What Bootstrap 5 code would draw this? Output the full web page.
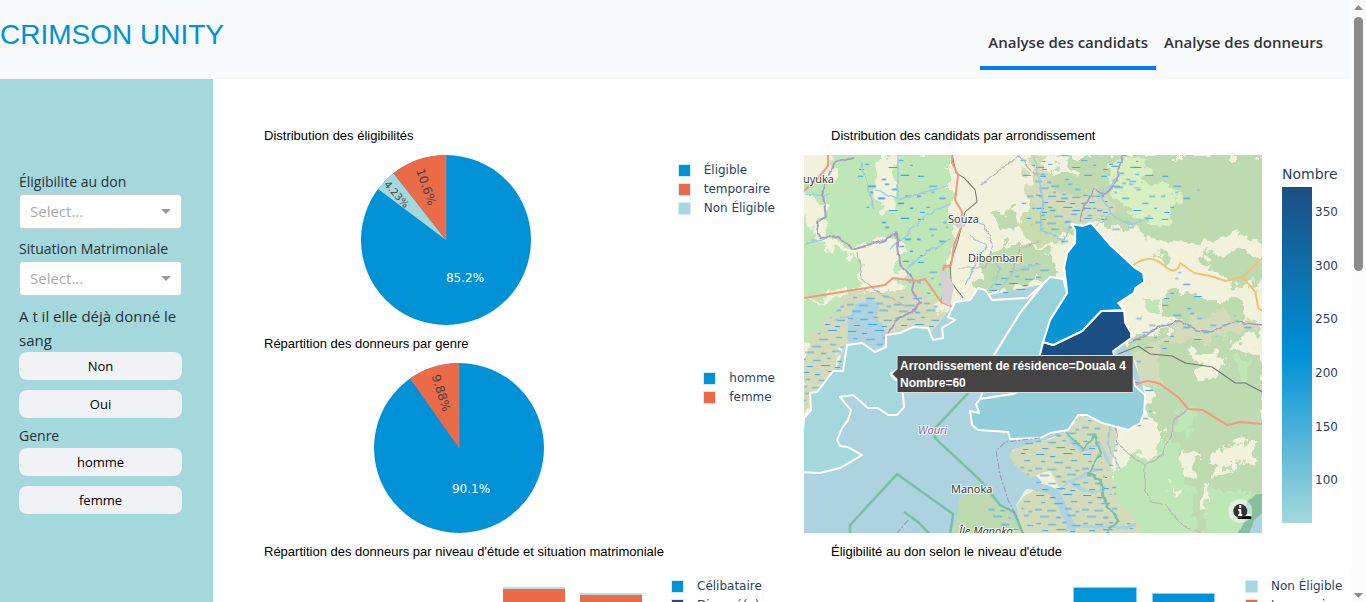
<!DOCTYPE html>
<html lang="fr">
<head>
<meta charset="utf-8">
<meta name="viewport" content="width=device-width, initial-scale=1">
<title>Crimson Unity</title>
<link href="https://cdn.jsdelivr.net/npm/bootstrap@5.3.0/dist/css/bootstrap.min.css" rel="stylesheet">
<style>
:root{--blue:#0091d7;--red:#eb6a48;--teal:#a5d8dc;--navy:#1b4f83;--ink:#2a3f5f}
body{font-family:"Open Sans","Noto Sans",sans-serif;background:#fff}
.topbar{background:#f8f9fb;height:79px;padding-right:20px}
.brand-name{font:28px/36px "Liberation Sans",Arial,sans-serif;color:var(--blue);padding-top:17px}
.tabs{padding-top:15px}
.tabs .nav-link{font-size:15px;line-height:24px;font-weight:600;color:#333;padding:15px 8px 12px;border-bottom:4px solid transparent}
.tabs .nav-link.active{border-color:#007bff}
.side{flex:0 0 213px;background:var(--teal);padding:91px 31px 0 19px;color:#24313a;font-size:14px;line-height:24px}
.side label{display:block}
.side .question{font-size:15px}
.side .group{margin-bottom:8px}
.side .group-tight{margin-bottom:6px}
.side .choices{gap:10px}
.pick{display:block;width:100%;height:35px;appearance:none;border:1px solid #ccc;border-radius:4px;color:#aaa;padding:0 10px 2px;font-size:15px;
 background:#fff url("data:image/svg+xml,%3Csvg xmlns='http://www.w3.org/2000/svg' width='10' height='5'%3E%3Cpath d='M0 0h10L5 5z' fill='%23999'/%3E%3C/svg%3E") no-repeat right 10px center}
.choice{height:28px;background:#f0f2f5;border:0;border-radius:8px;color:#000;font-size:13px;line-height:20px;padding:0}
.charts{display:grid;grid-template-columns:1fr 1fr;column-gap:20px;padding:46px 0 0 24px}
.chart-title{font:13px/20px "Liberation Sans",Arial,sans-serif;color:#000;margin:0;padding:1px 0 0 27px}
.chart-block{display:flex;flex-direction:column;gap:9px;padding-bottom:8px}
.tall{grid-row:span 2}
.plot{height:170px;padding-right:9px;gap:22px}
.key{font:12px/19px "DejaVu Sans",Verdana,sans-serif;color:var(--ink);padding:6px 0 0;margin:0;list-style:none;white-space:nowrap}
.key li{display:flex;align-items:center;gap:13px}
.key i{width:13px;height:13px;border:1px solid #d3ebf6}
.key-wide{width:104px}
.k-blue{background:var(--blue)}.k-red{background:var(--red)}.k-teal{background:var(--teal)}.k-navy{background:var(--navy)}
svg text{font-family:"DejaVu Sans",Verdana,sans-serif;font-size:12px}
.map-row{height:378px;gap:20px;padding-right:9px}
.map-row .town{font-family:"Open Sans","Noto Sans",sans-serif;font-size:11px;fill:#333;stroke:#fff;stroke-width:2px;stroke-opacity:.8;paint-order:stroke}
.map-row .tip{font:bold 12px "Liberation Sans",Arial,sans-serif;fill:#fff}
.map-row .scale-title{font-size:14px}
.rail{flex:0 0 15px;background:#fcfcfc}
.rail .thumb{width:9px;height:254px;border-radius:5px;background:#8b8b8b}
</style>
</head>
<body>
<div class="d-flex vh-100 overflow-hidden">
<div class="flex-fill overflow-hidden d-flex flex-column">
 <header class="topbar d-flex justify-content-between flex-shrink-0">
  <div class="brand-name">CRIMSON UNITY</div>
  <nav class="nav tabs align-items-start">
   <a class="nav-link active" href="#candidats">Analyse des candidats</a>
   <a class="nav-link" href="#donneurs">Analyse des donneurs</a>
  </nav>
 </header>
 <div class="d-flex flex-fill">
  <aside class="side">
   <div class="group"><label for="elig">Éligibilite au don</label><select class="pick" id="elig"><option>Select...</option></select></div>
   <div class="group"><label for="situ">Situation Matrimoniale</label><select class="pick" id="situ"><option>Select...</option></select></div>
   <div class="group-tight"><div class="question">A t il elle déjà donné le sang</div>
    <div class="d-grid choices"><button class="btn choice" type="button">Non</button><button class="btn choice" type="button">Oui</button></div></div>
   <div><div>Genre</div>
    <div class="d-grid choices"><button class="btn choice" type="button">homme</button><button class="btn choice" type="button">femme</button></div></div>
  </aside>
  <main class="charts flex-fill align-content-start">
   <section class="chart-block">
    <h2 class="chart-title">Distribution des éligibilités</h2>
    <div class="plot d-flex">
     <div class="flex-fill text-center"><svg width="170" height="170" viewBox="-85 -85 170 170">
      <circle r="85" fill="#0091d7"/>
      <path d="M0 0L-68 -51A85 85 0 0 1 -52.500 -66.800Z" fill="#a5d8dc"/>
      <path d="M0 0L-52.500 -66.800A85 85 0 0 1 0 -85Z" fill="#eb6a48"/>
      <path d="M0 0V-85" stroke="#a58f94" stroke-width=".7"/>
      <text x="19" y="42" text-anchor="middle" fill="#fff">85.2%</text>
      <text transform="translate(-20 -53) rotate(71)" text-anchor="middle" y="4" fill="#444">10.6%</text>
      <text transform="translate(-49 -46) rotate(48)" text-anchor="middle" y="4" fill="#444" style="font-size:10px">4.23%</text>
     </svg></div>
     <ul class="key"><li><i class="k-blue"></i>Éligible</li><li><i class="k-red"></i>temporaire</li><li><i class="k-teal"></i>Non Éligible</li></ul>
    </div>
   </section>
   <section class="chart-block tall">
    <h2 class="chart-title">Distribution des candidats par arrondissement</h2>
    <div class="map-row d-flex">
     <svg class="flex-fill" width="10" height="378" viewBox="804 155 458 378" preserveAspectRatio="xMidYMid slice">
      <defs>
       <filter id="rough" x="-20%" y="-20%" width="140%" height="140%"><feTurbulence type="fractalNoise" baseFrequency=".07" numOctaves="4" seed="4"/><feDisplacementMap in="SourceGraphic" scale="26" xChannelSelector="R" yChannelSelector="G"/></filter>
       <filter id="wavy" x="-20%" y="-20%" width="140%" height="140%"><feTurbulence type="fractalNoise" baseFrequency=".09" numOctaves="2" seed="8"/><feDisplacementMap in="SourceGraphic" scale="6" xChannelSelector="R" yChannelSelector="G"/></filter>
       <pattern id="marsh" width="47" height="41" patternUnits="userSpaceOnUse"><path transform="translate(0 .5)" d="M2 3h8M16 5h5M29 2h9M7 10h4M20 11h9M37 9h6M1 17h7M13 18h9M31 16h6M41 19h4M6 24h9M22 25h5M33 23h9M2 31h5M14 32h8M28 30h4M38 33h8M8 38h6M22 37h9M36 39h5" stroke="#3d9df2" fill="none"/></pattern>
       <pattern id="sparse" width="61" height="43" patternUnits="userSpaceOnUse"><path transform="translate(0 .5)" d="M3 4h6M28 7h4M47 3h8M14 14h8M38 17h5M2 24h4M24 26h7M51 24h6M11 35h4M35 38h8M56 36h3M16 20h3M44 31h6M31 12h4M5 40h5" stroke="#3d9df2" fill="none"/></pattern>
       <clipPath id="frame"><path d="M804 155h458v378H804z"/></clipPath>
      </defs>
      <g clip-path="url(#frame)" fill="none" stroke-linejoin="round">
       <path fill="#f1f1dc" d="M790 140h490v410H790z"/>
       <!-- forests and meadows -->
       <g filter="url(#rough)">
        <path fill="#bee6b6" d="M838 150H950V180L952 235L944 300L915 300L900 285V240L880 240L855 252L828 238L822 215L826 200L800 195V185L830 178zM790 205L820 235L830 250L857 258L862 285L800 305z"/>
        <path fill="#bee6b6" d="M800 306L855 297L840 318L804 345z"/>
        <path fill="#bddab1" d="M1040 155H1280V250L1245 235L1200 244L1165 240L1125 230L1100 222L1070 232L1048 240L1030 225L1040 190zM1200 255L1240 250L1262 262V285L1240 288L1215 276zM1120 345L1150 335L1190 322L1262 325V432L1235 450L1200 470L1175 455L1150 405L1140 380z"/>
        <path fill="#bddab1" d="M1165 290L1195 290L1205 300L1240 300L1244 318L1190 325L1160 320zM1160 420L1280 430V550H1150L1125 480zM1005 245L1035 245L1060 262L1050 280L1000 290L975 290L985 255z"/>
        <path fill="#bee6b6" d="M1125 455L1170 440L1185 480L1200 550H1130L1105 485zM1205 490L1250 490L1245 550H1205zM1143 295l14 5 4 15-16-2zM1180 410l20 5-10 18-17-5zM1235 360h14v18h-14z"/>
        <path fill="#d3dcba" d="M845 290L900 290L925 290L945 310L950 345L885 345L840 350L842 376L800 420V350L830 315zM1030 155H1048L1055 188L1080 195L1105 188L1112 212L1090 224L1065 227L1030 235L1028 180zM1180 325L1220 310L1262 330L1220 338L1160 345L1127 358zM1120 350L1160 345L1160 385L1145 390z"/>
        <path fill="#d8efc2" d="M1120 155L1150 160L1143 180L1180 190L1165 225L1130 215L1108 190L1110 165z"/>
        <path fill="#f1f1dc" d="M883 155H898L896 180L890 215L876 205L875 175zM1050 155L1068 160L1075 178L1060 172L1045 165zM1188 350L1225 355L1218 375L1195 378zM1180 450L1200 453L1195 475L1180 472zM1165 480L1180 483L1170 505L1160 522zM1210 450L1255 438V460L1230 465L1228 475L1210 470zM1205 485h8l-5 30-8-6z"/>
        <path fill="#f1f1dc" d="M1110 430L1130 435L1145 420L1165 435L1155 460L1130 465L1115 455zM1228 345L1262 335V350L1248 355z"/>
        <path fill="#bddab1" d="M990 218l22-12 10 20-20 8zM1155 258l9-8 8 14-8 4z"/>
       </g>
       <path fill="#c8dcae" filter="url(#rough)" d="M1025 205h30l10 35-20 8-24-15z"/>
       <!-- estuary -->
       <path fill="#acd3df" d="M804 420L812 408L812 395L835 372L845 346L870 344L884 348L886 335L930 335L955 302L1040 285L1130 350L1145 395L1140 425L1128 430L1078 415L1066 432L1045 440L1012 450L1012 458L1030 470L1042 482L1025 490L1016 505L1025 534H804z"/>
       <path fill="#acd3df" filter="url(#wavy)" d="M848 320l8-16 14-6 9 6-2 14 10 18-4 14-20-6-16 2z"/>
       <path fill="#d3dcba" d="M1066 432L1078 415L1102 423L1117 427L1115 448L1110 470L1118 500L1140 525L1135 534H1020L1017 505L1024 496L1042 486L1060 490L1050 470L1030 478L1015 465L1009 455L1016 448L1050 439z"/>
       <path fill="#bddab1" d="M959 499L970 486H983L993 498L1010 512L1020 534H950L956 520z"/>
       <path fill="#bee6b6" filter="url(#rough)" d="M1120 460l45-5 10 40 25 45h-50l-22-50z"/>
       <path stroke="#acd3df" stroke-width="8" d="M1012 479C1035 490 1048 485 1056 495S1065 520 1075 530"/>
       <g stroke="#acd3df" stroke-width="3" filter="url(#wavy)"><path d="M1055 492C1070 475 1085 480 1095 470M1065 530C1085 520 1110 533 1135 525M1066 435L1080 450L1100 445L1110 465M1070 480Q1090 500 1105 487"/></g>
       <!-- wetlands -->
       <g fill="url(#marsh)"><path d="M804 353L830 318L850 295H925L943 310L940 335L925 326L886 332L882 347L846 343L840 369L812 393L804 412z"/>
        <path d="M1022 436L1066 432L1078 415L1100 424L1100 450L1105 480L1118 510L1115 533H1030L1020 505L1035 482L1020 468z"/>
        <path d="M1035 160h10l8 30 25 4 25-6 8 25-20 8-40 5-20 8zM1115 157h22l6 30-30 5-5-18zM985 281L1035 262L1065 275L1035 284L1025 295L990 297z"/>
        <path d="M985 503L1003 508L1020 530H997z"/></g>
       <g fill="url(#sparse)"><path d="M856 160L900 158L945 190L950 250L938 300L905 280L900 235L880 225L860 195z"/>
        <path d="M870 160L920 165V280L903 260L895 230L865 225zM1020 155H1125L1200 190L1185 225L1110 235L1060 245L1022 215z"/>
        <path d="M1135 315L1225 308L1255 330L1170 345L1140 375L1160 385L1145 430L1118 440L1115 510L1170 530H1130L1104 480L1120 430zM1180 270L1205 300L1200 340L1130 335z"/></g>
       <!-- rivers -->
       <g stroke="#9fcbe0" stroke-width="1.500" filter="url(#wavy)"><path d="M805 193L830 195M805 244L828 238M860 160L875 210M876 190L898 200V155M898 200L950 185M890 250L925 215L950 205M905 270L930 250L950 240M895 235L880 240M965 285L985 245L970 235M990 250L1000 270L990 290M1000 290L1015 270L1038 265M1034 155L1043 200L1040 230L1065 240L1070 225M1122 157L1113 185L1100 195L1111 213L1095 228M1111 213Q1130 230 1142 220M835 320L855 313M1110 425L1108 445L1120 470"/></g>
       <g filter="url(#wavy)"><path stroke="#a99bc4" stroke-width="2" d="M853 158L835 163L826 180L823 195L826 217L816 222L819 238L840 236L852 250L870 245L884 240L897 233L900 265L908 272L914 280L912 290L920 303L912 312L895 320L885 340M847 345L845 370L812 395L811 412"/>
        <path stroke="#a99bc4" stroke-width="1.500" d="M1122 155L1115 185L1103 195L1094 190L1085 205L1080 222M1128 343L1155 330L1180 320L1195 330L1212 332L1235 322L1262 325"/></g>
       <g stroke="#b7aeba" filter="url(#wavy)"><path d="M980 185L1004 168L1018 155L1035 175L1042 175M970 220L985 225L993 245L985 268L958 268M1040 240L1020 250L1010 275M858 252L862 280L875 290L908 307M1114 425L1118 445L1145 465L1144 485L1150 502L1165 505L1183 525L1200 532M1147 465L1162 455L1175 420L1188 408"/></g>
       <path stroke="#71756e" d="M952 155L956 173L964 178L975 190L977 202L965 212L958 240L950 265L951 282L963 298M1118 354L1138 346L1150 354L1172 356L1185 363L1212 367L1235 383L1245 383L1262 392"/>
       <!-- roads -->
       <g stroke="#f7977f" stroke-width="2"><path d="M804 298L885 285L893 278L917 281L925 279L941 302L953 307M941 302L946 280L943 268L951 265L954 245L962 225V212L955 200L958 175L952 163V155M828 155V166L818 178L804 191M1135 385Q1147 378 1160 384L1179 398L1188 409L1203 410L1227 425L1240 422L1262 424"/></g>
       <path stroke="#f5c073" stroke-width="2" d="M1133 265Q1150 253 1163 265T1180 263L1194 273L1210 276L1225 281L1242 277L1262 258M1242 277L1255 292L1258 308L1262 311"/>
       <!-- coloured districts -->
       <g stroke="#fff" stroke-width="2">
        <path fill="#a5d8dc" d="M804 418L811 410L810 393L817 392L833 371L843 371L847 345L862 343L875 352L886 347V335L900 333L913 327L928 328L933 340L943 338L942 328L955 320L948 317L955 302L970 300L978 288L985 290L992 300L1027 298L1044 283L1020 313L994 355L985 370L900 368L890 374L902 386L904 407L897 415L888 415L878 408H868L853 395L840 397L851 410L848 420L842 428L837 440L840 446L848 447L862 455L840 468L820 473L800 472z"/>
        <path fill="#98d2da" d="M1044 283L1050 277L1063 279L1067 293L1050 320L1043 343L1040 365V390L1013 394L980 399L985 385L994 355L1020 313z"/>
        <path fill="#93cfda" d="M1040 380L1013 394L980 399L976 404L979 413L970 411L972 425L978 430L1008 432L1010 439L1040 438L1050 433L1068 430L1078 415L1087 415L1102 423L1117 427L1128 430L1140 423L1144 413L1145 395L1135 386L1130 370z"/>
        <path fill="#1b4f83" d="M1101 311H1124L1125 323L1131 333V338L1113 351L1116 370H1036L1043 342L1053 345L1082 331z"/>
        <path fill="#0694d7" d="M1071 224L1083 226L1091 223L1110 245L1135 268L1143 273L1144 282L1135 288L1134 293L1118 303L1124 310L1101 311L1082 331L1053 345L1043 342L1050 320L1067 293L1064 267L1067 253L1075 243V230z"/>
       </g>
       <!-- marine borders -->
       <g stroke="#7cbfa5" stroke-width="2.500"><path d="M968 393L935 428V438L980 480L1000 505L1014 512L1023 534"/><path d="M850 534V525L897 474L953 514L950 534M904 512L918 522L930 534"/>
        <path filter="url(#wavy)" d="M1066 432L1083 449L1094 435L1100 455L1088 475L1100 480L1105 500L1118 522L1105 534"/></g>
       <path stroke="#a18fb5" stroke-dasharray="6 2 2 2" d="M1040 438L1005 442L996 451L1000 475L1008 500L1018 520M908 520L896 534"/>
       <path filter="url(#wavy)" fill="#86bf9d" d="M1270 492L1247 500L1245 520L1235 540H1270z"/>
       <g stroke="none"><path fill="#acd3df" d="M1254 520l8-7v20h-13z"/><circle cx="960" cy="222" r="6" fill="#d5d0d1"/><path fill="#d5d0d1" d="M940 272l6-2 8 16-4 20-8-4z"/></g>
       <!-- place names -->
       <text class="town" x="803" y="183">uyuka</text><text class="town" x="948" y="223">Souza</text><text class="town" x="968" y="262">Dibombari</text><text class="town" x="951" y="493">Manoka</text>
       <text class="town" x="918" y="434" font-style="italic" style="fill:#8a6496">Wouri</text><text class="town" x="959" y="535" font-style="italic">Île Manoka</text>
       <!-- hover label -->
       <path d="M892 374L897 369V355.500H1133V392.500H897V379z" fill="#444" stroke="#ddd"/>
       <text class="tip" x="900" y="370">Arrondissement de résidence=Douala 4</text><text class="tip" x="900" y="387">Nombre=60</text>
       <circle cx="1240" cy="511" r="12" fill="#fff" fill-opacity=".5"/><path d="M1240 516h11v3h-14z" fill="#000"/><path d="M1243 514h8v2h-8z" fill="#fff"/><circle cx="1240" cy="511" r="7" fill="#333"/><path d="M1240 505v3M1238 510h2v5M1238 515h4" stroke="#fff" stroke-width="2"/>
      </g>
     </svg>
     <svg class="flex-shrink-0" width="60" height="378" viewBox="1282 155 60 378">
      <defs><linearGradient id="ramp" x2="0" y2="1"><stop stop-color="#1b4f83"/><stop offset=".5" stop-color="#0091d7"/><stop offset="1" stop-color="#a5d8dc"/></linearGradient></defs>
      <path d="M1282 187h30v336h-30z" fill="url(#ramp)"/>
      <g fill="#2a3f5f"><text class="scale-title" x="1282" y="179">Nombre</text><text x="1315" y="216">350</text><text x="1315" y="270">300</text><text x="1315" y="323">250</text><text x="1315" y="377">200</text><text x="1315" y="431">150</text><text x="1315" y="484">100</text></g>
     </svg>
    </div>
   </section>
   <section class="chart-block">
    <h2 class="chart-title">Répartition des donneurs par genre</h2>
    <div class="plot d-flex">
     <div class="flex-fill text-center"><svg width="170" height="170" viewBox="-85 -85 170 170">
      <circle r="85" fill="#0091d7"/>
      <path d="M0 0L-49 -69.500A85 85 0 0 1 0 -85Z" fill="#eb6a48"/><path d="M0 0V-85" stroke="#a58f94" stroke-width=".7"/>
      <text x="12" y="45" text-anchor="middle" fill="#fff">90.1%</text>
      <text transform="translate(-18 -55) rotate(73)" text-anchor="middle" y="4" fill="#444">9.88%</text>
     </svg></div>
     <ul class="key"><li><i class="k-blue"></i>homme</li><li><i class="k-red"></i>femme</li></ul>
    </div>
   </section>
   <section class="chart-block">
    <h2 class="chart-title">Répartition des donneurs par niveau d'étude et situation matrimoniale</h2>
    <div class="plot d-flex">
     <div class="flex-fill text-end"><svg width="412" height="170"><path d="M266 16h62v154h-62zM343 22h62v148h-62z" fill="#b9dcea"/><path d="M266 18h62v152h-62zM343 24h62v146h-62z" fill="#eb6a48"/></svg></div>
     <ul class="key key-wide"><li><i class="k-blue"></i>Célibataire</li><li><i class="k-navy"></i>Divorcé(e)</li></ul>
    </div>
   </section>
   <section class="chart-block">
    <h2 class="chart-title">Éligibilité au don selon le niveau d'étude</h2>
    <div class="plot d-flex">
     <div class="flex-fill text-end"><svg width="419" height="170"><path d="M269.500 16.500h63v153h-63zM348.500 22.500h62v147h-62z" fill="#0091d7" stroke="#8fcbeb"/></svg></div>
     <ul class="key"><li><i class="k-teal"></i>Non Éligible</li><li><i class="k-red"></i>temporaire</li></ul>
    </div>
   </section>
  </main>
 </div>
</div>
<div class="rail d-flex flex-column align-items-center justify-content-between" aria-hidden="true">
 <div><svg class="d-block mx-auto" width="9" height="17"><path d="M0 10L4.500 5L9 10z" fill="#8b8b8b"/></svg><div class="thumb"></div></div>
 <svg width="9" height="12"><path d="M0 3h9L4.500 8z" fill="#8b8b8b"/></svg>
</div>
</div>
<script src="https://cdn.jsdelivr.net/npm/bootstrap@5.3.0/dist/js/bootstrap.bundle.min.js"></script>
</body>
</html>
